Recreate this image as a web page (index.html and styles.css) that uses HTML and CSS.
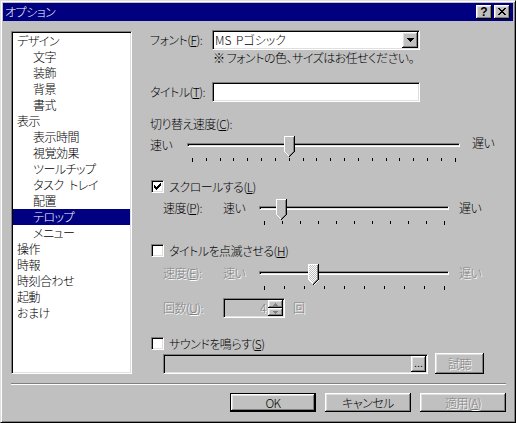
FILE: index.html
```html
<!DOCTYPE html>
<html lang="ja">
<head>
<meta charset="utf-8">
<title>オプション</title>
<link rel="stylesheet" href="styles.css">
</head>
<body>
<div class="window">
  <div class="titlebar">
    <span class="title">オプション</span>
    <div class="tb-buttons">
      <span class="tb-btn help">?</span>
      <span class="tb-btn close"><svg width="8" height="7" viewBox="0 0 8 7" shape-rendering="crispEdges"><path d="M0 0h2v1h-2zM6 0h2v1h-2zM1 1h2v1h-2zM5 1h2v1h-2zM2 2h4v1h-4zM3 3h2v1h-2zM2 4h4v1h-4zM1 5h2v1h-2zM5 5h2v1h-2zM0 6h2v1h-2zM6 6h2v1h-2z" fill="#000"/></svg></span>
    </div>
  </div>

  <div class="main">
    <ul class="tree sunken">
      <li>デザイン</li>
      <li class="child">文字</li>
      <li class="child">装飾</li>
      <li class="child">背景</li>
      <li class="child">書式</li>
      <li>表示</li>
      <li class="child">表示時間</li>
      <li class="child">視覚効果</li>
      <li class="child">ツールチップ</li>
      <li class="child">タスク&ensp;トレイ</li>
      <li class="child">配置</li>
      <li class="child sel">テロップ</li>
      <li class="child">メニュー</li>
      <li>操作</li>
      <li>時報</li>
      <li>時刻合わせ</li>
      <li>起動</li>
      <li>おまけ</li>
    </ul>

    <div class="panel">
      <div class="row row-field">
        <span class="lbl-field">フォント(<u>F</u>):</span>
        <div class="combo sunken">
          <span class="combo-text">MS Pゴシック</span>
          <span class="dd-btn raised"><svg width="7" height="4" viewBox="0 0 7 4" shape-rendering="crispEdges"><path d="M0 0h7v1h-7zM1 1h5v1h-5zM2 2h3v1h-3zM3 3h1v1h-1z" fill="#000"/></svg></span>
        </div>
      </div>
      <div class="note">※ フォントの色、サイズはお任せください。</div>

      <div class="row row-field row-title">
        <span class="lbl-field">タイトル(<u>T</u>):</span>
        <div class="textbox sunken"></div>
      </div>

      <div class="group-label">切り替え速度(<u>C</u>):</div>

      <div class="slider-row sr1">
        <span class="s-lbl s-fast1">速い</span>
        <div class="slider w1">
          <div class="track"></div>
          <svg class="thumb" style="left:97px" width="11" height="21" viewBox="0 0 11 21" shape-rendering="crispEdges"><path d="M0 0H11V16L6 21H5L0 16Z" fill="#c0c0c0"/><path d="M0 0h10v1h-9v15h-1zM1 16h1v1h-1zM2 17h1v1h-1zM3 18h1v1h-1zM4 19h1v1h-1z" fill="#fff"/><path d="M10 0h1v16h-1zM9 16h1v1h-1zM8 17h1v1h-1zM7 18h1v1h-1zM6 19h1v1h-1zM5 20h1v1h-1z" fill="#000"/><path d="M9 1h1v15h-1zM8 16h1v1h-1zM7 17h1v1h-1zM6 18h1v1h-1zM5 19h1v1h-1z" fill="#808080"/></svg>
          <div class="ticks">
            <i></i><i></i><i></i><i></i><i></i><i></i><i></i><i></i><i></i><i></i>
            <i></i><i></i><i></i><i></i><i></i><i></i><i></i><i></i><i></i><i></i>
          </div>
        </div>
        <span class="s-lbl s-slow1">遅い</span>
      </div>

      <div class="check-row cr1">
        <span class="cb sunken"><svg width="7" height="7" viewBox="0 0 7 7" shape-rendering="crispEdges"><path d="M6 0h1v1h-1zM5 1h2v1h-2zM0 2h1v1h-1zM4 2h3v1h-3zM0 3h2v1h-2zM3 3h3v1h-3zM0 4h5v1h-5zM1 5h3v1h-3zM2 6h1v1h-1z" fill="#000"/></svg></span>
        <span>スクロールする(<u>L</u>)</span>
      </div>

      <div class="slider-row sub sr2">
        <span class="s-lbl s-name">速度(<u>P</u>):</span>
        <span class="s-lbl s-fast">速い</span>
        <div class="slider w2">
          <div class="track"></div>
          <svg class="thumb" style="left:17px" width="11" height="21" viewBox="0 0 11 21" shape-rendering="crispEdges"><path d="M0 0H11V16L6 21H5L0 16Z" fill="#c0c0c0"/><path d="M0 0h10v1h-9v15h-1zM1 16h1v1h-1zM2 17h1v1h-1zM3 18h1v1h-1zM4 19h1v1h-1z" fill="#fff"/><path d="M10 0h1v16h-1zM9 16h1v1h-1zM8 17h1v1h-1zM7 18h1v1h-1zM6 19h1v1h-1zM5 20h1v1h-1z" fill="#000"/><path d="M9 1h1v15h-1zM8 16h1v1h-1zM7 17h1v1h-1zM6 18h1v1h-1zM5 19h1v1h-1z" fill="#808080"/></svg>
          <div class="ticks">
            <i></i><i></i><i></i><i></i><i></i><i></i><i></i><i></i><i></i><i></i><i></i>
          </div>
        </div>
        <span class="s-lbl s-slow">遅い</span>
      </div>

      <div class="check-row cr2">
        <span class="cb sunken"></span>
        <span>タイトルを点滅させる(<u>H</u>)</span>
      </div>

      <div class="slider-row sub sr3">
        <span class="s-lbl s-name dis">速度(<u>E</u>):</span>
        <span class="s-lbl s-fast dis">速い</span>
        <div class="slider w2">
          <div class="track"></div>
          <svg class="thumb" style="left:49px" width="11" height="21" viewBox="0 0 11 21" shape-rendering="crispEdges"><defs><pattern id="dither" width="2" height="2" patternUnits="userSpaceOnUse"><rect width="2" height="2" fill="#c0c0c0"/><rect width="1" height="1" fill="#fff"/><rect x="1" y="1" width="1" height="1" fill="#fff"/></pattern></defs><path d="M0 0H11V16L6 21H5L0 16Z" fill="url(#dither)"/><path d="M0 0h10v1h-9v15h-1zM1 16h1v1h-1zM2 17h1v1h-1zM3 18h1v1h-1zM4 19h1v1h-1z" fill="#fff"/><path d="M10 0h1v16h-1zM9 16h1v1h-1zM8 17h1v1h-1zM7 18h1v1h-1zM6 19h1v1h-1zM5 20h1v1h-1z" fill="#000"/><path d="M9 1h1v15h-1zM8 16h1v1h-1zM7 17h1v1h-1zM6 18h1v1h-1zM5 19h1v1h-1z" fill="#808080"/></svg>
          <div class="ticks">
            <i></i><i></i><i></i><i></i><i></i><i></i><i></i><i></i><i></i><i></i>
          </div>
        </div>
        <span class="s-lbl s-slow dis">遅い</span>
      </div>

      <div class="spin-row sub">
        <span class="s-name dis">回数(<u>U</u>):</span>
        <div class="spin sunken">
          <span class="spin-val dis">4</span>
          <div class="spin-btns">
            <span class="spin-btn raised"><svg width="5" height="3" viewBox="0 0 5 3" shape-rendering="crispEdges"><path d="M2 0h1v1h-1zM1 1h3v1h-3zM0 2h5v1h-5z" fill="#808080"/></svg></span>
            <span class="spin-btn raised"><svg width="5" height="3" viewBox="0 0 5 3" shape-rendering="crispEdges"><path d="M0 0h5v1h-5zM1 1h3v1h-3zM2 2h1v1h-1z" fill="#808080"/></svg></span>
          </div>
        </div>
        <span class="unit dis">回</span>
      </div>

      <div class="check-row cr3">
        <span class="cb sunken"></span>
        <span>サウンドを鳴らす(<u>S</u>)</span>
      </div>

      <div class="file-row sub">
        <div class="file-edit sunken">
          <span class="browse raised">...</span>
        </div>
        <span class="btn listen raised dis">試聴</span>
      </div>
    </div>
  </div>

  <div class="sep"></div>

  <div class="buttons">
    <span class="btn btn-main default">OK</span>
    <span class="btn btn-main raised">キャンセル</span>
    <span class="btn btn-main raised dis">適用(<u>A</u>)</span>
  </div>
</div>
</body>
</html>
```

FILE: styles.css
```css
* { box-sizing: border-box; }

html, body {
  margin: 0;
  padding: 0;
  background: #c0c0c0;
}

body {
  font-family: "Noto Sans CJK JP", "Noto Sans", sans-serif;
  font-size: 12px;
  font-weight: 300;
  color: #000;
  font-feature-settings: "palt";
  letter-spacing: -0.5px;
  line-height: 16px;
}

u { text-decoration: underline; text-underline-offset: 1px; }

.window {
  width: 516px;
  height: 423px;
  background: #c0c0c0;
  border: 1px solid;
  border-color: #dfdfdf #000 #000 #dfdfdf;
  box-shadow: inset 1px 1px #fff, inset -1px -1px #808080;
  padding: 2px;
}

/* generic 3D frames */
.sunken {
  border: 1px solid;
  border-color: #808080 #fff #fff #808080;
  box-shadow: inset 1px 1px #000, inset -1px -1px #dfdfdf;
}

.raised {
  background: #c0c0c0;
  box-shadow: inset -1px -1px #000, inset 1px 1px #fff, inset -2px -2px #808080, inset 2px 2px #dfdfdf;
}

.dis {
  color: #808080;
  text-shadow: 1px 1px 0 #fff;
}

/* title bar */
.titlebar {
  height: 18px;
  background: #000080;
  color: #fff;
  display: flex;
  align-items: center;
  justify-content: space-between;
  padding: 0 3px 0 2px;
}

.title { line-height: 18px; }

.tb-buttons { display: flex; }

.tb-btn {
  width: 16px;
  height: 14px;
  background: #c0c0c0;
  box-shadow: inset -1px -1px #000, inset 1px 1px #fff, inset -2px -2px #808080, inset 2px 2px #dfdfdf;
  display: flex;
  align-items: center;
  justify-content: center;
  color: #000;
  letter-spacing: 0;
}

.help {
  margin-right: 2px;
  font-family: "Liberation Sans", sans-serif;
  font-weight: bold;
  font-size: 12px;
  line-height: 14px;
  padding-bottom: 1px;
}

.close svg { margin-top: -1px; }

/* main area */
.main {
  display: flex;
  height: 353px;
  padding: 10px 0 0 8px;
}

.tree {
  list-style: none;
  margin: 0;
  padding: 1px;
  width: 121px;
  height: 343px;
  background: #fff;
  flex: none;
}

.tree li {
  height: 16px;
  line-height: 16px;
  padding-left: 4px;
  white-space: nowrap;
}

.tree li.child { padding-left: 20px; }

.tree li.sel { background: #000080; color: #fff; }

.panel {
  margin-left: 18px;
  margin-top: -1px;
  width: 356px;
}

.row { display: flex; align-items: center; }

.row-field { height: 20px; }

.lbl-field { width: 62px; flex: none; white-space: nowrap; }

.combo {
  width: 208px;
  height: 20px;
  background: #fff;
  padding: 1px;
  display: flex;
  align-items: center;
}

.combo-text {
  padding-left: 1px;
  flex: 1;
  line-height: 16px;
  letter-spacing: 0;
  word-spacing: 2px;
  white-space: pre;
}

.dd-btn {
  width: 16px;
  height: 16px;
  display: flex;
  align-items: center;
  justify-content: center;
  flex: none;
}

.note {
  height: 16px;
  padding-left: 63px;
  white-space: nowrap;
}

.row-title { margin-top: 16px; }

.textbox {
  width: 208px;
  height: 20px;
  background: #fff;
}

.group-label {
  margin-top: 14px;
  height: 16px;
}

/* sliders */
.slider-row {
  display: flex;
  align-items: flex-start;
}

.sr1 { margin-top: 4px; }
.sr2 { margin-top: 6px; }
.sr3 { margin-top: 7px; }

.sub { padding-left: 13px; }

.s-lbl { margin-top: 1px; white-space: nowrap; }
.s-fast1 { width: 37px; flex: none; }
.s-name { width: 60px; flex: none; white-space: nowrap; }
.s-fast { width: 36px; flex: none; }
.s-slow1 { margin-left: 12px; margin-top: -1px; }
.s-slow { margin-left: 10px; }

.slider {
  position: relative;
  height: 26px;
  flex: none;
}

.w1 { width: 273px; }
.w2 { width: 190px; }

.track {
  margin-top: 7px;
  height: 4px;
  border: 1px solid;
  border-color: #808080 #fff #fff #808080;
  box-shadow: inset 1px 1px #000, inset -1px -1px #dfdfdf;
}

.thumb {
  position: absolute;
  top: 0;
  display: block;
}

.ticks {
  margin-top: 11px;
  padding: 0 4px 0 5px;
  height: 4px;
  display: flex;
  justify-content: space-between;
  align-items: flex-start;
}

.ticks i {
  display: block;
  width: 1px;
  height: 3px;
  background: #000;
}

.ticks i:first-child,
.ticks i:last-child { height: 4px; }

/* checkboxes */
.check-row {
  display: flex;
  align-items: center;
  height: 13px;
  padding-left: 1px;
  white-space: nowrap;
}

.cr1 { margin-top: 18px; }
.cr2 { margin-top: 19px; }
.cr3 { margin-top: 19px; }

.cb {
  width: 13px;
  height: 13px;
  background: #fff;
  margin-right: 5px;
  flex: none;
  display: flex;
  align-items: center;
  justify-content: center;
}

/* spin */
.spin-row {
  margin-top: 8px;
  display: flex;
  align-items: center;
  height: 20px;
}

.spin {
  width: 62px;
  height: 20px;
  padding: 1px;
  display: flex;
  align-items: center;
  background: #c0c0c0;
}

.spin-val {
  flex: 1;
  text-align: right;
  padding-right: 2px;
}

.spin-btns {
  width: 15px;
  height: 16px;
  display: flex;
  flex-direction: column;
}

.spin-btn {
  height: 8px;
  display: flex;
  align-items: center;
  justify-content: center;
}

.unit { margin-left: 8px; }

/* file row */
.file-row {
  margin-top: 3px;
  display: flex;
  align-items: flex-start;
}

.file-edit {
  width: 265px;
  height: 20px;
  margin-top: 1px;
  padding: 1px;
  background: #c0c0c0;
  display: flex;
  justify-content: flex-end;
}

.browse {
  width: 15px;
  height: 16px;
  font-family: "Liberation Sans", sans-serif;
  font-weight: normal;
  font-size: 11px;
  line-height: 15px;
  text-align: center;
  letter-spacing: 0;
  color: #000;
}

.btn {
  display: flex;
  align-items: center;
  justify-content: center;
  white-space: nowrap;
}

.listen {
  width: 49px;
  height: 21px;
  margin-left: 7px;
}

/* bottom */
.sep {
  margin: 9px 7px 0 8px;
  height: 2px;
  border-top: 1px solid #808080;
  border-bottom: 1px solid #fff;
}

.buttons {
  margin-top: 8px;
  display: flex;
  justify-content: flex-end;
  gap: 9px;
  padding-right: 7px;
}

.btn-main {
  width: 86px;
  height: 19px;
}

.default {
  background: #c0c0c0;
  border: 1px solid #000;
  box-shadow: inset -1px -1px #000, inset 1px 1px #fff, inset -2px -2px #808080, inset 2px 2px #dfdfdf;
}
```
